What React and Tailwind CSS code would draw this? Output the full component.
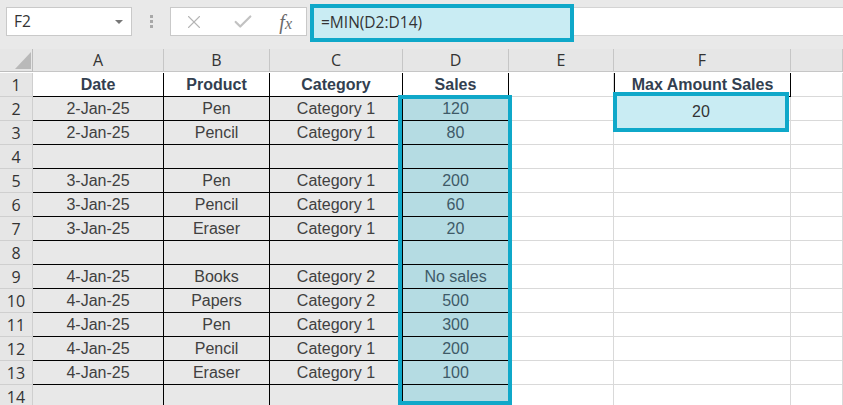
import { X, Check } from "lucide-react";

// sheet data: rows 1..14, cols A..D plus F
const rows = [
  ["Date", "Product", "Category", "Sales"],
  ["2-Jan-25", "Pen", "Category 1", "120"],
  ["2-Jan-25", "Pencil", "Category 1", "80"],
  ["", "", "", ""],
  ["3-Jan-25", "Pen", "Category 1", "200"],
  ["3-Jan-25", "Pencil", "Category 1", "60"],
  ["3-Jan-25", "Eraser", "Category 1", "20"],
  ["", "", "", ""],
  ["4-Jan-25", "Books", "Category 2", "No sales"],
  ["4-Jan-25", "Papers", "Category 2", "500"],
  ["4-Jan-25", "Pen", "Category 1", "300"],
  ["4-Jan-25", "Pencil", "Category 1", "200"],
  ["4-Jan-25", "Eraser", "Category 1", "100"],
  ["", "", "", ""],
];

const cols = ["A", "B", "C", "D", "E", "F", ""];

function TopBar() {
  return (
    <div className="h-[49px] bg-[#e9e9e9] flex items-start pt-[7px] pl-[6px] relative">
      <div className="w-[126px] h-[29px] bg-white border border-[#c9c9c9] flex items-center justify-between pl-[7px] pr-[8px] text-[15.5px] text-[#333] font-['Open_Sans',sans-serif]">
        <span>F2</span>
        <span className="w-0 h-0 border-l-[4px] border-r-[4px] border-t-[4px] border-l-transparent border-r-transparent border-t-[#777]"></span>
      </div>
      <div className="w-[38px] h-[29px] flex flex-col items-center justify-center gap-[2px]">
        <span className="w-[3px] h-[3px] bg-[#a8a8a8]"></span>
        <span className="w-[3px] h-[3px] bg-[#a8a8a8]"></span>
        <span className="w-[3px] h-[3px] bg-[#a8a8a8]"></span>
      </div>
      <div className="w-[137px] h-[29px] bg-white border border-[#c9c9c9] flex items-center pl-[12px] pr-[14px] justify-between">
        <X size={22} strokeWidth={1.2} className="text-[#b5b5b5]" />
        <Check size={22} strokeWidth={2.4} className="text-[#c2c2c2] ml-[8px]" />
        <span className="font-['Liberation_Serif',serif] italic text-[20px] leading-none text-[#6b6b6b] ml-[6px]">
          f<span className="text-[16px]">x</span>
        </span>
      </div>
      <div className="flex-1 h-[29px] bg-white border-y border-[#d4d4d4] ml-[4px]"></div>
      <div className="absolute left-[310px] top-[4px] w-[264px] h-[38px] border-[4px] border-[#0fa8c9] bg-[#c9ecf3] flex items-center pl-[7px] text-[15.5px] text-[#333] font-['Open_Sans',sans-serif]">
        =MIN(D2:D14)
      </div>
    </div>
  );
}

function Cell({ r, c, value }) {
  const inTable = r >= 1 && r <= 14 && c >= 1 && c <= 4;
  const isHeader = r === 1;
  const isF1 = r === 1 && c === 6;
  let bg = "bg-white";
  if (inTable && !isHeader && c <= 3) bg = "bg-[#e8e8e8]";
  if (inTable && !isHeader && c === 4) bg = "bg-[#b5dce3]";
  let border = "border-r border-b border-[#d9d9d9]";
  if (inTable) border = "border-r border-b border-black";
  if (isF1) border = "border-l border-r border-b border-black";
  let text = "text-[#404040]";
  if (isHeader) text = "text-[#333f50] font-bold";
  if (c === 4 && !isHeader) text = "text-[#3e5a68]";
  return (
    <div className={`h-[24px] flex items-center justify-center text-[16px] leading-none font-['Liberation_Sans',Arial,sans-serif] whitespace-nowrap overflow-hidden ${bg} ${border} ${text}`}>
      {value}
    </div>
  );
}

export default function App() {
  return (
    <div className="w-[843px] h-[405px] overflow-hidden bg-white relative">
      <TopBar />
      <div className="grid grid-cols-[33px_131px_106px_133px_106px_105px_177px_1fr] auto-rows-[24px]">
        {/* corner cell */}
        <div className="h-[23px] bg-[#e6e6e6] border-r border-b border-[#bdbdbd] relative">
          <svg className="absolute left-[15px] top-[3px]" width="16" height="17" viewBox="0 0 16 17">
            <polygon points="16,0 16,17 0,17" fill="#b9b9b9" />
          </svg>
        </div>
        {cols.map((c, i) => (
          <div
            key={i}
            className="h-[23px] bg-[#e6e6e6] border-r border-b border-[#c6c6c6] flex items-center justify-center text-[16px] text-[#333] font-['Open_Sans',sans-serif]"
          >
            {c}
          </div>
        ))}

        {rows.map((row, ri) => {
          const r = ri + 1;
          return [
            <div
              key={`h${r}`}
              className="h-[24px] bg-[#e6e6e6] border-r border-b border-[#cfcfcf] flex items-center justify-center text-[16px] text-[#333] font-['Open_Sans',sans-serif]"
            >
              {r}
            </div>,
            ...row.map((v, ci) => <Cell key={`${r}-${ci}`} r={r} c={ci + 1} value={v} />),
            <Cell key={`${r}-e`} r={r} c={5} value="" />,
            <Cell key={`${r}-f`} r={r} c={6} value={r === 1 ? "Max Amount Sales" : ""} />,
            <Cell key={`${r}-g`} r={r} c={7} value="" />,
          ];
        })}
      </div>

      {/* selection highlights */}
      <div className="absolute left-[398px] top-[95px] w-[114px] h-[310px] border-[4px] border-[#0fa8c9]"></div>
      <div className="absolute left-[613px] top-[92px] w-[176px] h-[40px] border-[4px] border-[#0fa8c9] bg-[#c9ecf3] flex items-center justify-center text-[16px] text-[#333] font-['Liberation_Sans',Arial,sans-serif]">
        20
      </div>
    </div>
  );
}
